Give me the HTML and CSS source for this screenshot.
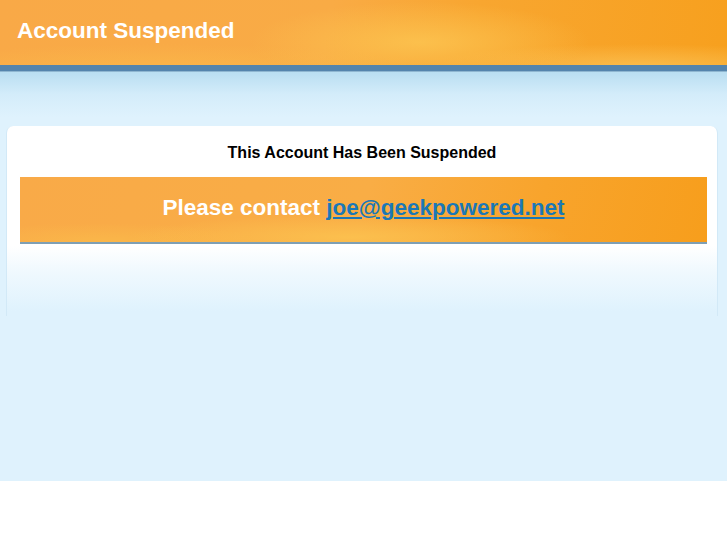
FILE: index.html
```html
<!DOCTYPE html>
<html lang="en">
<head>
    <meta charset="UTF-8">
    <meta name="viewport" content="width=device-width, initial-scale=1.0">
    <title>Account Suspended</title>
    <link rel="stylesheet" href="styles.css">
</head>
<body>
    <div class="page">
        <!-- 顶部橙色标题栏 -->
        <div class="header">
            <h1 class="title">Account Suspended</h1>
        </div>
        <div class="stripe"></div>
        <div class="main">
            <div class="card">
                <h2 class="card-title">This Account Has Been Suspended</h2>
                <div class="notice">Please contact <a class="mail" href="mailto:joe@geekpowered.net">joe@geekpowered.net</a></div>
            </div>
        </div>
    </div>
</body>
</html>
```

FILE: styles.css
```css
* {
    margin: 0;
    padding: 0;
}

html,
body {
    width: 100%;
    height: 100%;
    background: #fff;
    font-family: "Liberation Sans", Arial, sans-serif;
}

.page {
    height: 481px;
    background: #dff2fd;
    overflow: hidden;
}

.header {
    height: 65px;
    padding: 18px 0 0 17px;
    box-sizing: border-box;
    background:
        radial-gradient(ellipse 170px 40px at 420px 42px, rgba(252, 196, 80, 0.85), rgba(252, 196, 80, 0) 100%),
        radial-gradient(ellipse 280px 28px at 160px 72px, rgba(251, 190, 75, 0.6), rgba(251, 190, 75, 0) 100%),
        radial-gradient(ellipse 220px 22px at 640px 66px, rgba(252, 198, 90, 0.7), rgba(252, 198, 90, 0) 100%),
        linear-gradient(100deg, #f9a947 0%, #f9ab45 45%, #f8a630 65%, #f7a01e 100%);
}

.title {
    color: #fff;
    font-size: 22.5px;
    font-weight: bold;
    line-height: 26px;
}

.stripe {
    height: 6px;
    background: #5484ac;
    border-bottom: 1px solid #8fb6d0;
}

.main {
    padding: 54px 9px 0 6px;
    background: linear-gradient(#b9def1 0, #d3ecfa 22px, #dff2fd 45px);
}

.card {
    height: 190px;
    border-radius: 7px 7px 0 0;
    border-left: 1px solid #d2e9f7;
    border-right: 1px solid #d2e9f7;
    background: linear-gradient(#fff 0, #fff 120px, #f0f9fe 145px, #dff2fd 185px);
}

.card-title {
    padding-top: 17px;
    text-align: center;
    font-size: 16px;
    line-height: 20px;
    color: #000;
}

.notice {
    margin: 14px 10px 0 13px;
    height: 65px;
    border-bottom: 2px solid #7f9fb4;
    text-align: center;
    line-height: 62px;
    color: #fff;
    font-size: 22.5px;
    font-weight: bold;
    background:
        radial-gradient(ellipse 220px 22px at 330px 60px, rgba(252, 196, 80, 0.8), rgba(252, 196, 80, 0) 100%),
        radial-gradient(ellipse 160px 18px at 80px 64px, rgba(251, 190, 75, 0.6), rgba(251, 190, 75, 0) 100%),
        linear-gradient(105deg, #f9aa48 0%, #f9ad45 50%, #f8a42c 75%, #f79e1c 100%);
}

.mail {
    color: #1b78b6;
    text-decoration: underline;
}
```
